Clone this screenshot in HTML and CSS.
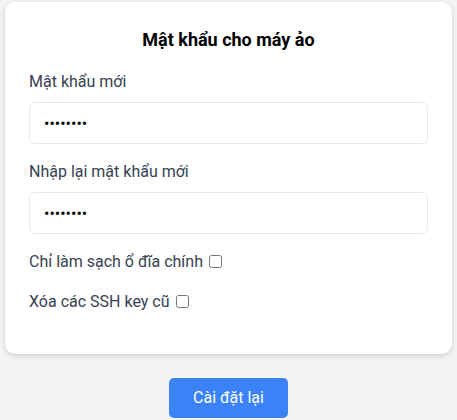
FILE: index.html
```html
<!DOCTYPE html>
<html lang="vi">
<head>
    <meta charset="UTF-8">
    <meta name="viewport" content="width=device-width, initial-scale=1">
    <title>Cài đặt lại mật khẩu</title>
    <link rel="stylesheet" href="styles.css">
</head>
<body>
    <div class="wrap">
        <div class="card">
            <h2 class="title">Mật khẩu cho máy ảo</h2>

            <label class="field-label" for="pw">Mật khẩu mới</label>
            <input id="pw" class="field" type="password" value="12345678">

            <label class="field-label" for="pw2">Nhập lại mật khẩu mới</label>
            <input id="pw2" class="field" type="password" value="12345678">

            <div class="check-row">
                <label>Chỉ làm sạch ổ đĩa chính <input type="checkbox"></label>
            </div>
            <div class="check-row">
                <label>Xóa các SSH key cũ <input type="checkbox"></label>
            </div>
        </div>

        <div class="actions">
            <button class="button">Cài đặt lại</button>
        </div>
    </div>
</body>
</html>
```

FILE: styles.css
```css
body {
    background-color: #f3f4f6;
    font-family: Roboto, "Liberation Sans", sans-serif;
    margin: 0;
    padding: 0;
    color: #374151;
}

.wrap {
    padding: 2px 5px;
}

/* Card */
.card {
    background: white;
    border-radius: 10px;
    padding: 24px;
    box-shadow: 0 2px 6px rgba(0, 0, 0, 0.12), 0 1px 3px rgba(0, 0, 0, 0.06);
}

.title {
    margin: 0 0 16px 0;
    font-size: 18px;
    line-height: 28px;
    font-weight: 700;
    color: #000;
    text-align: center;
}

.field-label {
    display: block;
    font-size: 16px;
    line-height: 24px;
    margin-bottom: 8px;
}

.field {
    display: block;
    box-sizing: border-box;
    width: 100%;
    height: 42px;
    padding: 8px 14px;
    margin: 0 0 16px 0;
    border: 1px solid #e5e7eb;
    border-radius: 6px;
    font-family: Roboto, "Liberation Sans", sans-serif;
    font-size: 16px;
    line-height: 24px;
    color: #000;
    outline: none;
}

.check-row {
    font-size: 16px;
    line-height: 24px;
    margin-bottom: 16px;
}

.check-row input {
    vertical-align: middle;
    margin: 0 0 2px 2px;
    width: 13px;
    height: 13px;
}

/* Button */
.actions {
    text-align: center;
    padding-top: 24px;
}

.button {
    background-color: #3b82f6;
    color: white;
    border: none;
    padding: 8px 24px;
    font-family: Roboto, "Liberation Sans", sans-serif;
    font-size: 16px;
    line-height: 24px;
    border-radius: 5px;
    cursor: pointer;
}
```
